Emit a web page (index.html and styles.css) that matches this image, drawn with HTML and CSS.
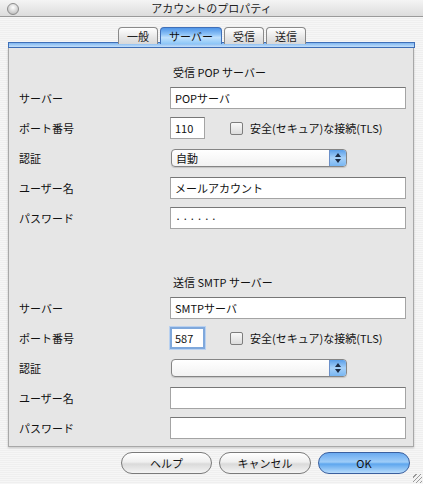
FILE: index.html
```html
<!DOCTYPE html>
<html lang="ja">
<head>
    <meta charset="UTF-8">
    <title>アカウントのプロパティ</title>
    <link rel="stylesheet" href="styles.css">
</head>
<body>
    <div class="window">
        <div class="titlebar">
            <span class="close_bnt"></span>
            <span class="title">アカウントのプロパティ</span>
        </div>

        <div class="tabs">
            <div class="tab">一般</div>
            <div class="tab active">サーバー</div>
            <div class="tab">受信</div>
            <div class="tab">送信</div>
        </div>
        <div class="tabbar"></div>

        <div class="panel">
            <h3 class="section">受信 POP サーバー</h3>
            <div class="form">
                <label>サーバー</label>
                <div class="field">POPサーバ</div>

                <label>ポート番号</label>
                <div class="port_row">
                    <div class="field port">110</div>
                    <span class="check"></span>
                    <span class="check_text">安全(セキュア)な接続(TLS)</span>
                </div>

                <label>認証</label>
                <div class="select"><span>自動</span><span class="arrows"></span></div>

                <label>ユーザー名</label>
                <div class="field">メールアカウント</div>

                <label>パスワード</label>
                <div class="field dots">······</div>
            </div>

            <h3 class="section second">送信 SMTP サーバー</h3>
            <div class="form">
                <label>サーバー</label>
                <div class="field">SMTPサーバ</div>

                <label>ポート番号</label>
                <div class="port_row">
                    <div class="field port focus">587</div>
                    <span class="check"></span>
                    <span class="check_text">安全(セキュア)な接続(TLS)</span>
                </div>

                <label>認証</label>
                <div class="select"><span></span><span class="arrows"></span></div>

                <label>ユーザー名</label>
                <div class="field"></div>

                <label>パスワード</label>
                <div class="field"></div>
            </div>
        </div>

        <div class="buttons">
            <button class="btn help">ヘルプ</button>
            <button class="btn cancel">キャンセル</button>
            <button class="btn ok">OK</button>
        </div>
        <div class="grip"></div>
    </div>
</body>
</html>
```

FILE: styles.css
```css
body { margin: 0; font-family: "Noto Sans CJK JP", "Liberation Sans", sans-serif; font-size: 11px; color: #111; }
.window { position: relative; width: 423px; height: 484px; overflow: hidden; background: repeating-linear-gradient(#efefef 0 1px, #f6f6f6 1px 2px); }

.titlebar { height: 16px; display: flex; align-items: center; justify-content: center; background: linear-gradient(#f4f4f4, #dcdcdc); border-bottom: 1px solid #9a9a9a; position: relative; }
.title { font-size: 11px; line-height: 16px; color: #222; }
.close_bnt { position: absolute; left: 7px; top: 3px; width: 10px; height: 10px; border-radius: 50%; border: 1px solid #8c8c8c; background: radial-gradient(circle at 50% 35%, #ffffff, #c8c8c8 70%, #a8a8a8); }

.tabs { display: flex; justify-content: center; gap: 2px; margin-top: 10px; height: 17px; padding-left: 1px; }
.tab { height: 16px; line-height: 17px; padding: 0 8px; border: 1px solid #8a8a8a; border-bottom: none; border-radius: 4px 4px 0 0; background: linear-gradient(#ffffff, #e6e6e6 60%, #d8d8d8); font-size: 11px; color: #222; }
.tab.active { background: linear-gradient(#4f95e8, #8ec3f7 40%, #bfe0fc 60%, #8cc6f7); border-color: #3f6fb8; color: #111; }

.tabbar { margin: -2px 8px 0 8px; height: 4px; border: 1px solid #3f6fb8; background: linear-gradient(#7eb6f0, #c4e0fa); }

.panel { margin: 0 9px 0 8px; height: 399px; box-sizing: border-box; padding: 16px 7px 0 10px; background: #e6e6e6; border: 1px solid #a8a8a8; border-top: none; box-shadow: 0 1px 2px rgba(0,0,0,0.2); }
.section { margin: 0 0 7px 154px; font-size: 11px; font-weight: normal; line-height: 16px; }
.section.second { margin-top: 45px; }

.form { display: grid; grid-template-columns: 151px 236px; grid-auto-rows: 22px; row-gap: 8px; align-items: center; }
.form label { font-size: 11px; }

.field { height: 22px; box-sizing: border-box; background: #fff; border: 1px solid #a4a4a4; border-top-color: #777; line-height: 20px; padding-left: 4px; font-size: 11px; color: #111; }
.field.dots { letter-spacing: 1px; }
.port_row { display: flex; align-items: center; height: 22px; }
.field.port { width: 35px; }
.field.focus { border: 2px solid #7fa8dc; box-shadow: 0 0 0 1px #b9d1f0; padding-left: 3px; line-height: 18px; }
.check { width: 11px; height: 11px; margin-left: 25px; border: 1px solid #7d7d7d; border-radius: 2px; background: linear-gradient(#f8f8f8, #dcdcdc); }
.check_text { margin-left: 7px; font-size: 11px; }

.select { width: 176px; height: 18px; margin-left: 1px; box-sizing: border-box; display: flex; justify-content: space-between; border: 1px solid #858585; border-radius: 4px; background: linear-gradient(#ffffff, #f2f2f2); line-height: 16px; padding-left: 4px; overflow: hidden; box-shadow: 0 1px 1px rgba(0,0,0,0.15); }
.arrows { width: 16px; height: 16px; border-left: 1px solid #6a8fc8; background: linear-gradient(#5a9ee8, #a6d0f8 50%, #78b6f2); position: relative; }
.arrows::before, .arrows::after { content: ""; position: absolute; left: 5px; border-left: 3px solid transparent; border-right: 3px solid transparent; }
.arrows::before { top: 3px; border-bottom: 4px solid #1a2a44; }
.arrows::after { top: 9px; border-top: 4px solid #1a2a44; }

.buttons { display: flex; justify-content: flex-end; gap: 7px; margin: 5px 13px 0 0; }
.btn { height: 22px; border: 1px solid #7a7a7a; border-radius: 11px; background: linear-gradient(#ffffff, #efefef 45%, #dadada 55%, #f4f4f4); font-family: inherit; font-size: 11px; color: #111; padding: 0; cursor: pointer; }
.btn.help { width: 91px; }
.btn.cancel { width: 92px; }
.btn.ok { width: 92px; border-color: #3a5f9e; background: linear-gradient(#6aaaf0, #9fcdf8 45%, #5ea6ee 55%, #b8dcfb); }
.grip { position: absolute; right: 1px; bottom: 1px; width: 9px; height: 9px; background: repeating-linear-gradient(135deg, transparent 0 2px, #9a9a9a 2px 3px); }
```
